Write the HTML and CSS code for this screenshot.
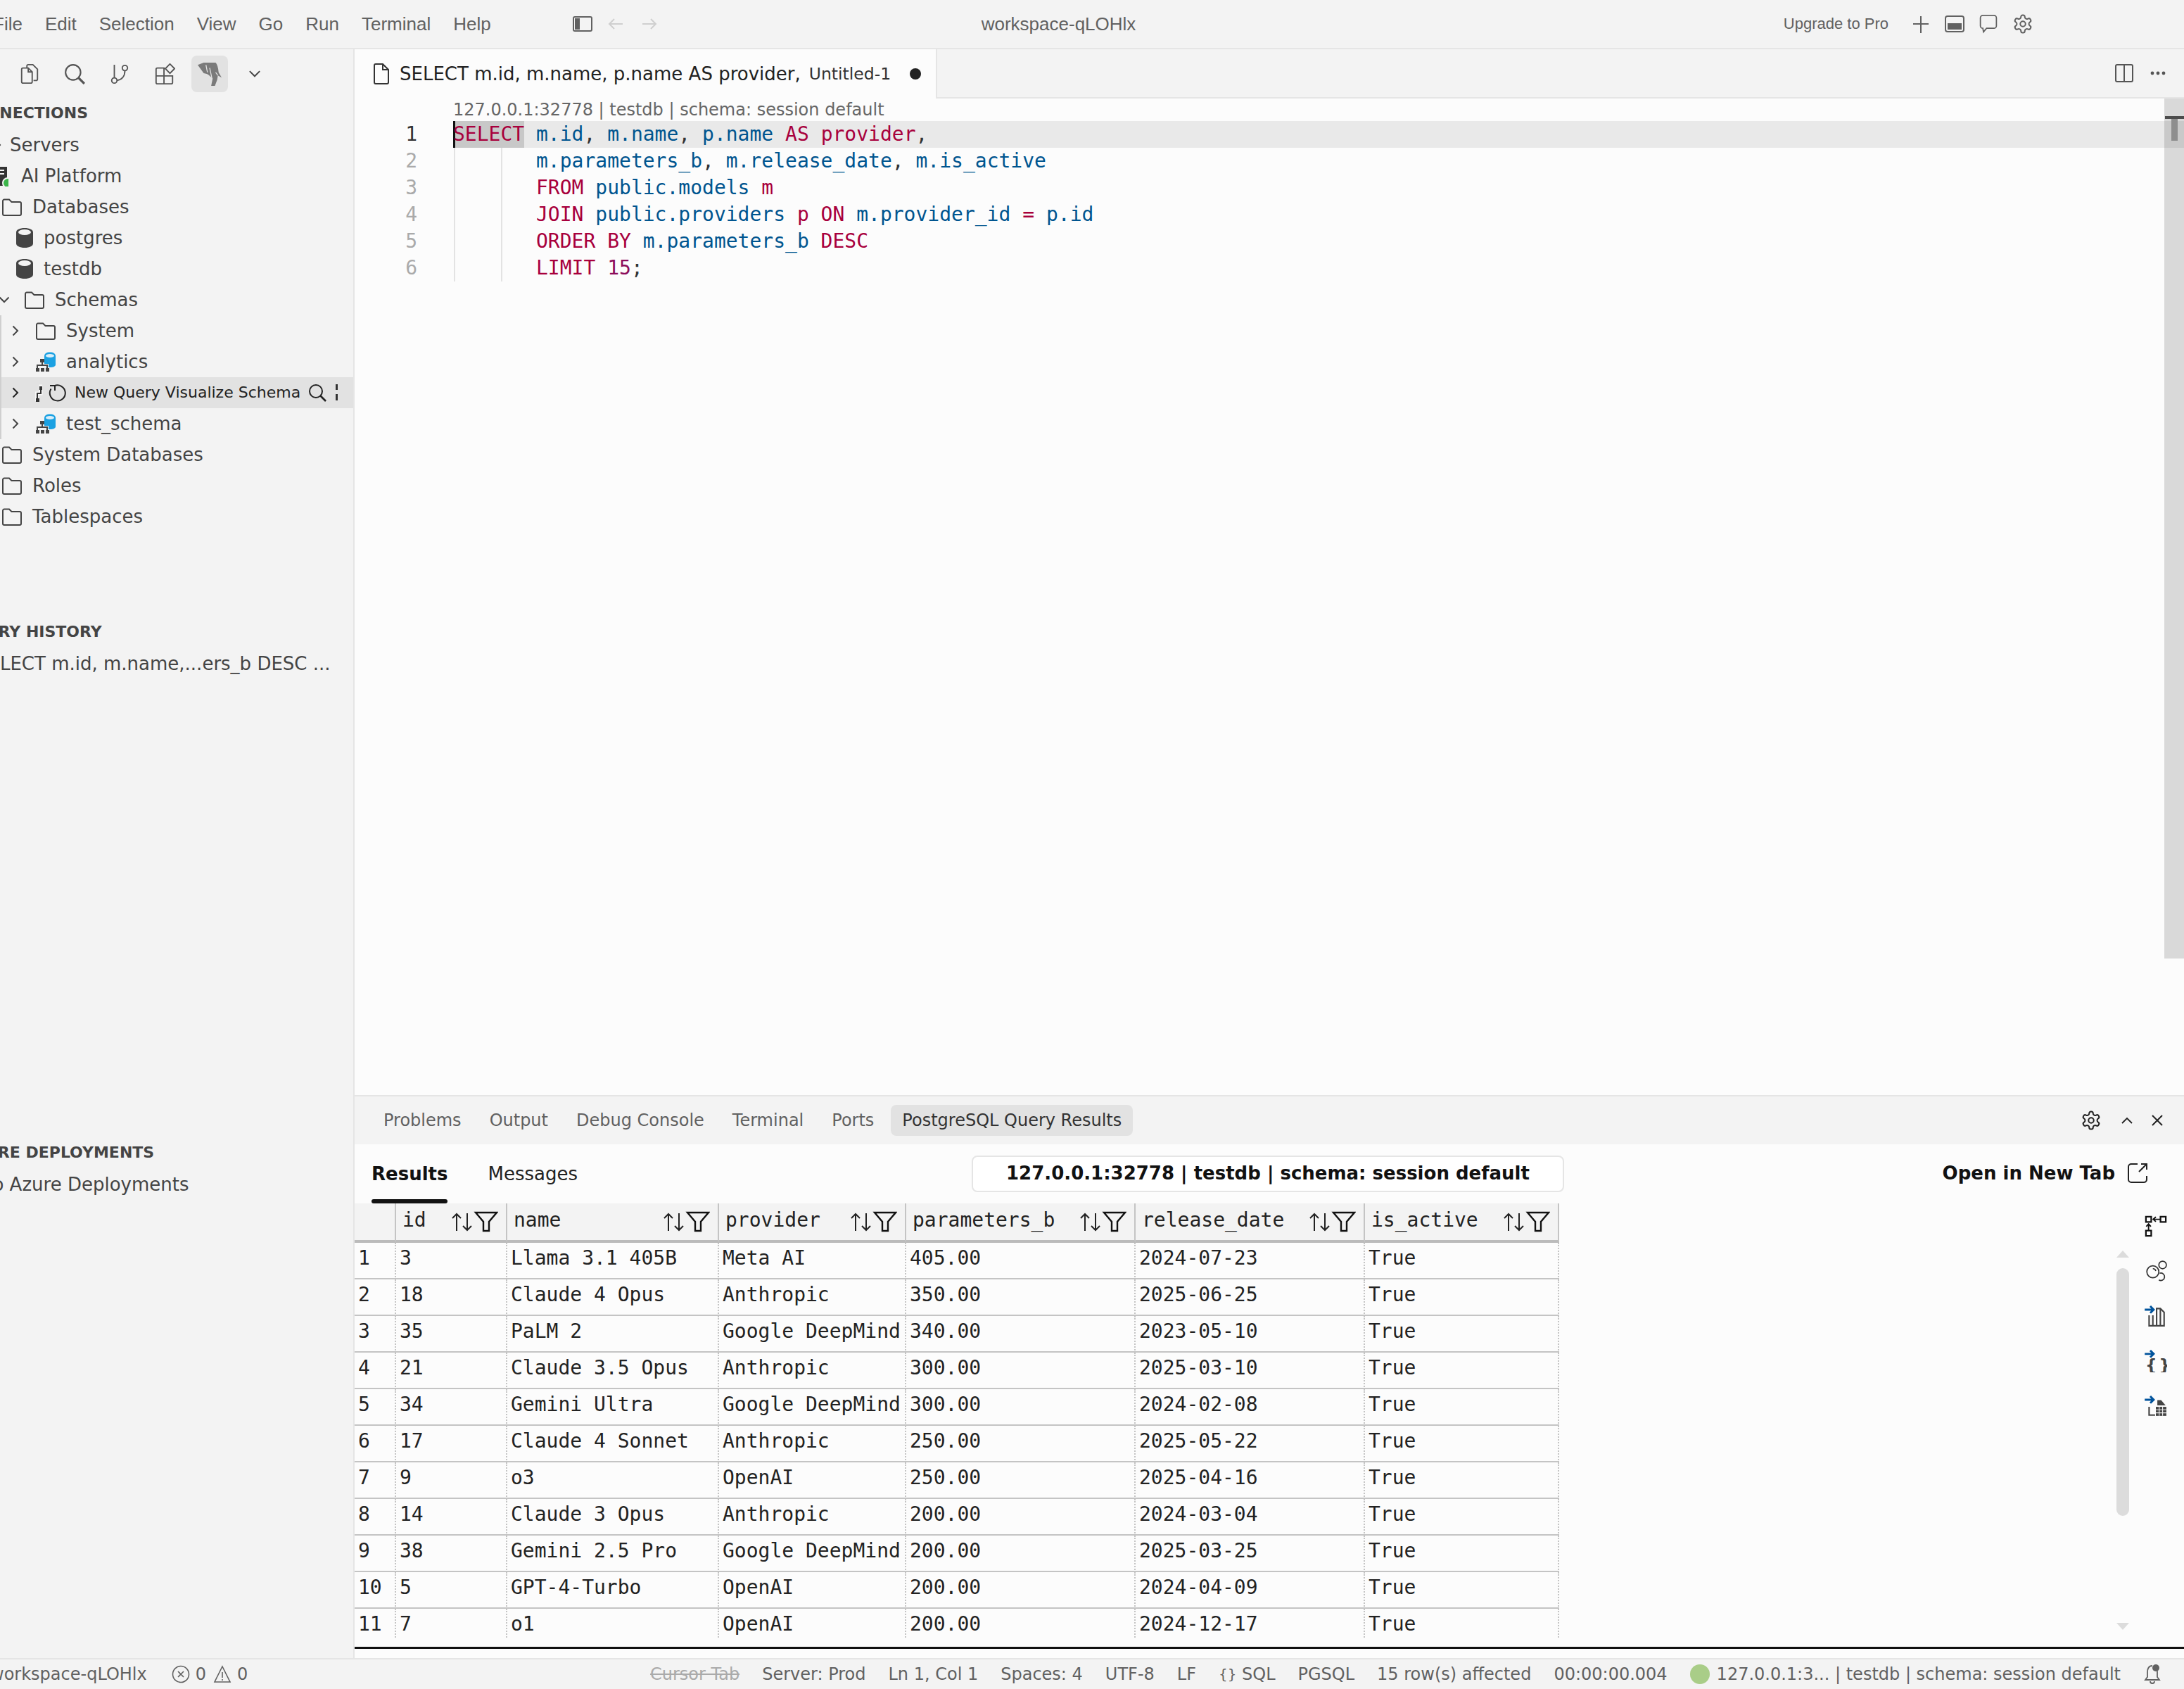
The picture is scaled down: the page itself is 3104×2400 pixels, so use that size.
FILE: index.html
```html
<!DOCTYPE html>
<html lang="en">
<head>
    <meta charset="UTF-8">
    <title>workspace-qLOHlx</title>
    <link rel="stylesheet" href="styles.css">
</head>
<body>
    <svg class="defs" width="0" height="0">
        <symbol id="folder" viewBox="0 0 30 30"><path d="M2 6.500a2 2 0 0 1 2-2h7l3.500 3.500H26a2 2 0 0 1 2 2V25a2 2 0 0 1-2 2H4a2 2 0 0 1-2-2z" fill="none" stroke="currentColor" stroke-width="2"/></symbol>
        <symbol id="chev-right" viewBox="0 0 20 20"><path d="M6.500 3.500 13 10l-6.500 6.500" fill="none" stroke="currentColor" stroke-width="2"/></symbol>
        <symbol id="chev-down" viewBox="0 0 20 20"><path d="M3.500 6.500 10 13l6.500-6.500" fill="none" stroke="currentColor" stroke-width="2"/></symbol>
        <symbol id="db" viewBox="0 0 26 30"><path d="M1 7c0-3.500 5-6 12-6s12 2.500 12 6v16c0 3.500-5 6-12 6S1 26.500 1 23z" fill="#444"/><ellipse cx="13" cy="7" rx="9" ry="4" fill="#f3f3f3"/></symbol>
        <symbol id="schema" viewBox="0 0 30 30"><path d="M13 7c0-3.500 3-5.500 8-5.500s8 2 8 5.500v12c0 2.500-3 4-8 4s-8-1.500-8-4z" fill="#1ba1e2"/><ellipse cx="21" cy="6.500" rx="6" ry="2.500" fill="#d9eef9"/><path d="M10 13v7M3 25v-5h14v5" fill="none" stroke="#f3f3f3" stroke-width="4"/><path d="M10 13v7M3 25v-5h14v5" fill="none" stroke="#444" stroke-width="2"/><path d="M7 11h6v5H7zM1 24h5v5H1zM8 24h5v5H8zM15 24h5v5h-5z" fill="#444"/></symbol>
        <symbol id="gear" viewBox="0 0 24 24"><g fill="none" stroke="currentColor" stroke-width="1.600"><path d="M12.220 2h-.44a2 2 0 0 0-2 2v.18a2 2 0 0 1-1 1.730l-.43.25a2 2 0 0 1-2 0l-.15-.08a2 2 0 0 0-2.730.73l-.22.38a2 2 0 0 0 .73 2.730l.15.1a2 2 0 0 1 1 1.720v.51a2 2 0 0 1-1 1.740l-.15.09a2 2 0 0 0-.73 2.730l.22.38a2 2 0 0 0 2.730.73l.15-.08a2 2 0 0 1 2 0l.43.25a2 2 0 0 1 1 1.730V20a2 2 0 0 0 2 2h.44a2 2 0 0 0 2-2v-.18a2 2 0 0 1 1-1.730l.43-.25a2 2 0 0 1 2 0l.15.08a2 2 0 0 0 2.730-.73l.22-.39a2 2 0 0 0-.73-2.730l-.15-.08a2 2 0 0 1-1-1.740v-.5a2 2 0 0 1 1-1.740l.15-.09a2 2 0 0 0 .73-2.730l-.22-.38a2 2 0 0 0-2.730-.73l-.15.08a2 2 0 0 1-2 0l-.43-.25a2 2 0 0 1-1-1.730V4a2 2 0 0 0-2-2z"/><circle cx="12" cy="12" r="3"/></g></symbol>
        <symbol id="sort-filter" viewBox="0 0 68 30"><path d="M9 28V4M3 10l6-6 6 6M24 3v24M18 21l6 6 6-6" fill="none" stroke="#222" stroke-width="2"/><path d="M36 2h30L55 15v13h-8V15z" fill="none" stroke="#111" stroke-width="2.400"/></symbol>
        <symbol id="arrow-blue" viewBox="0 0 16 12"><path d="M0 6h12M8 1l5 5-5 5" fill="none" stroke="#00539c" stroke-width="3"/></symbol>
    </svg>

    <div class="window">
        <header class="titlebar">
            <nav class="menu">
                <span>File</span><span>Edit</span><span>Selection</span><span>View</span><span>Go</span><span>Run</span><span>Terminal</span><span>Help</span>
            </nav>
            <svg class="layout-toggle" viewBox="0 0 28 24"><rect x="1" y="2" width="26" height="20" rx="2" fill="none" stroke="#616161" stroke-width="2"/><rect x="3" y="4" width="7" height="16" fill="#616161"/></svg>
            <svg class="nav-arrow first" viewBox="0 0 24 20"><path d="M22 10H3M10 3l-7 7 7 7" fill="none" stroke="#cfcfcf" stroke-width="2"/></svg>
            <svg class="nav-arrow" viewBox="0 0 24 20"><path d="M2 10h19M14 3l7 7-7 7" fill="none" stroke="#cfcfcf" stroke-width="2"/></svg>
            <div class="title">workspace-qLOHlx</div>
            <div class="title-actions">
                <span class="upgrade">Upgrade to Pro</span>
                <svg class="t-icon" viewBox="0 0 28 28"><path d="M14 3v24M3 14h22" stroke="#616161" stroke-width="2"/></svg>
                <svg class="t-icon" viewBox="0 0 28 28"><rect x="1" y="3" width="26" height="22" rx="3" fill="none" stroke="#616161" stroke-width="2"/><rect x="4" y="13" width="20" height="9" fill="#616161"/></svg>
                <svg class="t-icon" viewBox="0 0 28 32"><path d="M5 2h18a4 4 0 0 1 4 4v13a4 4 0 0 1-4 4H11l-5 6-1-6a4 4 0 0 1-4-4V6a4 4 0 0 1 4-4z" fill="none" stroke="#616161" stroke-width="2"/></svg>
                <svg class="t-icon gear-icon"><use href="#gear"/></svg>
            </div>
        </header>

        <div class="middle">
            <aside class="sidebar">
                <div class="activity">
                    <span class="act"><svg viewBox="0 0 28 32"><path d="M10 7V4a2 2 0 0 1 2-2h7l7 7v15a2 2 0 0 1-2 2h-4" fill="none" stroke="#555" stroke-width="2"/><path d="M4 7h8l6 6v15a2 2 0 0 1-2 2H4a2 2 0 0 1-2-2V9a2 2 0 0 1 2-2zM12 7v6h6" fill="none" stroke="#555" stroke-width="2"/></svg></span>
                    <span class="act"><svg viewBox="0 0 28 28"><circle cx="12" cy="12" r="10" fill="none" stroke="#555" stroke-width="2"/><path d="m19 19 8 8" stroke="#555" stroke-width="3"/></svg></span>
                    <span class="act"><svg viewBox="0 0 28 32"><circle cx="6" cy="26" r="4" fill="none" stroke="#555" stroke-width="2"/><circle cx="22" cy="7" r="4" fill="none" stroke="#555" stroke-width="2"/><path d="M6 22V2M22 11c0 8-4 14-12 15" fill="none" stroke="#555" stroke-width="2"/></svg></span>
                    <span class="act"><svg viewBox="0 0 32 32"><path d="M5 7h10v24H5a2 2 0 0 1-2-2V9a2 2 0 0 1 2-2zM15 19h13v10a2 2 0 0 1-2 2H15M3 19h12" fill="none" stroke="#555" stroke-width="2"/><path d="m24 1 7 7-7 7-7-7z" fill="none" stroke="#555" stroke-width="2"/></svg></span>
                    <span class="act active"><svg class="pg" viewBox="0 0 32 32"><path d="M0 4 8 1h16q3 3 4 13l4 7-5-3-1 6-3 8h-5l2-10-6-5-2-1-4-1z" fill="#7a7a7a"/><path d="m11 4 2 10M16 8l3 14M27 18l-3-4" fill="none" stroke="#e2e2e2" stroke-width="1.200"/></svg></span>
                    <span class="act"><svg class="small" viewBox="0 0 20 20"><path d="M3.500 6.500 10 13l6.500-6.500" fill="none" stroke="#444" stroke-width="1.800"/></svg></span>
                </div>

                <section class="sec-conn">
                    <h3 class="sec-title">CONNECTIONS</h3>
                    <div class="row servers"><svg class="chev"><use href="#chev-right"/></svg><span>Servers</span></div>
                    <div class="row platform">
                        <svg class="server-icon" viewBox="0 0 24 30"><rect x="0" y="2" width="22" height="27" fill="#333"/><path d="M4 7h14M4 12h14" stroke="#f3f3f3" stroke-width="2"/><circle cx="23" cy="25" r="8" fill="#f3f3f3"/><circle cx="23" cy="25" r="6" fill="#3cb54a"/></svg>
                        <span>AI Platform</span>
                    </div>
                    <div class="row top"><svg class="icon"><use href="#folder"/></svg><span>Databases</span></div>
                    <div class="row dbase"><svg class="db-icon"><use href="#db"/></svg><span>postgres</span></div>
                    <div class="row dbase"><svg class="db-icon"><use href="#db"/></svg><span>testdb</span></div>
                    <div class="row schemas"><svg class="chev"><use href="#chev-down"/></svg><svg class="icon"><use href="#folder"/></svg><span>Schemas</span></div>
                    <div class="guide-group">
                        <div class="row nested"><svg class="chev"><use href="#chev-right"/></svg><svg class="icon"><use href="#folder"/></svg><span>System</span></div>
                        <div class="row nested"><svg class="chev"><use href="#chev-right"/></svg><svg class="icon"><use href="#schema"/></svg><span>analytics</span></div>
                        <div class="row nested hovered">
                            <svg class="chev"><use href="#chev-right"/></svg>
                            <svg class="stub" viewBox="0 0 12 30"><path d="M10 6H8v10H2v11" fill="none" stroke="#f8f8f8" stroke-width="5"/><path d="M8 8v8H3v9" fill="none" stroke="#333" stroke-width="2"/><path d="M6 6h4v5H6zM1 23h5v5H1z" fill="#333"/></svg>
                            <svg class="spin" viewBox="0 0 26 26"><path d="M8 3.500A11 11 0 1 1 3.500 7.500M9 10V3H2" fill="none" stroke="#222" stroke-width="2"/></svg>
                            <span class="hover-text">New Query Visualize Schema</span>
                            <svg class="hover-search" viewBox="0 0 26 26"><circle cx="11" cy="11" r="9" fill="none" stroke="#222" stroke-width="2"/><path d="m17 17 8 8" stroke="#222" stroke-width="2.600"/></svg>
                            <svg class="hover-more" viewBox="0 0 3 24"><path d="M0 0h3v8H0zM0 14h3v9H0z" fill="#333"/></svg>
                        </div>
                        <div class="row nested"><svg class="chev"><use href="#chev-right"/></svg><svg class="icon"><use href="#schema"/></svg><span>test_schema</span></div>
                    </div>
                    <div class="row top"><svg class="icon"><use href="#folder"/></svg><span>System Databases</span></div>
                    <div class="row top"><svg class="icon"><use href="#folder"/></svg><span>Roles</span></div>
                    <div class="row top"><svg class="icon"><use href="#folder"/></svg><span>Tablespaces</span></div>
                </section>

                <section class="sec-history">
                    <h3 class="sec-title">QUERY HISTORY</h3>
                    <div class="row plain history-item"><span>SELECT m.id, m.name,...ers_b DESC ...</span></div>
                </section>

                <section>
                    <h3 class="sec-title">AZURE DEPLOYMENTS</h3>
                    <div class="row plain azure-item"><span>No Azure Deployments</span></div>
                </section>
            </aside>

            <main class="main">
                <div class="editor-area">
                    <div class="tabbar">
                        <div class="tab">
                            <svg class="file-icon" viewBox="0 0 24 30"><path d="M2 3a2 2 0 0 1 2-2h10l8 8v18a2 2 0 0 1-2 2H4a2 2 0 0 1-2-2zM14 1v8h8" fill="none" stroke="#333" stroke-width="2"/></svg>
                            <span class="tab-name">SELECT m.id, m.name, p.name AS provider,</span>
                            <span class="tab-desc">Untitled-1</span>
                            <span class="dirty"></span>
                        </div>
                        <div class="tab-actions">
                            <svg class="split-icon" viewBox="0 0 26 26"><rect x="1" y="1" width="24" height="24" rx="2" fill="none" stroke="#555" stroke-width="2"/><path d="M13 1v24" stroke="#555" stroke-width="2"/></svg>
                            <svg class="dots-icon" viewBox="0 0 22 6"><circle cx="3" cy="3" r="2.400" fill="#555"/><circle cx="11" cy="3" r="2.400" fill="#555"/><circle cx="19" cy="3" r="2.400" fill="#555"/></svg>
                        </div>
                    </div>
                    <div class="editor">
                        <div class="code-pane">
                            <div class="lens">127.0.0.1:32778 | testdb | schema: session default</div>
                            <div class="line current"><span class="ln">1</span><code><span class="kw sel">SELECT</span> <span class="id">m.id</span>, <span class="id">m.name</span>, <span class="id">p.name</span> <span class="kw">AS</span> <span class="kw">provider</span>,</code></div>
                            <div class="line"><span class="ln">2</span><code class="guides">       <span class="id">m.parameters_b</span>, <span class="id">m.release_date</span>, <span class="id">m.is_active</span></code></div>
                            <div class="line"><span class="ln">3</span><code class="guides">       <span class="kw">FROM</span> <span class="id">public.models</span> <span class="kw">m</span></code></div>
                            <div class="line"><span class="ln">4</span><code class="guides">       <span class="kw">JOIN</span> <span class="id">public.providers</span> <span class="kw">p</span> <span class="kw">ON</span> <span class="id">m.provider_id</span> <span class="kw">=</span> <span class="id">p.id</span></code></div>
                            <div class="line"><span class="ln">5</span><code class="guides">       <span class="kw">ORDER BY</span> <span class="id">m.parameters_b</span> <span class="kw">DESC</span></code></div>
                            <div class="line"><span class="ln">6</span><code class="guides">       <span class="kw">LIMIT</span> <span class="num">15</span>;</code></div>
                        </div>
                        <div class="ruler">
                            <div class="ruler-line"></div>
                            <div class="ruler-mark"></div>
                            <div class="ruler-cursor"></div>
                        </div>
                    </div>
                </div>

                <div class="panel">
                    <div class="panel-head">
                        <span class="ptab">Problems</span>
                        <span class="ptab">Output</span>
                        <span class="ptab">Debug Console</span>
                        <span class="ptab">Terminal</span>
                        <span class="ptab">Ports</span>
                        <span class="ptab on">PostgreSQL Query Results</span>
                        <div class="panel-actions">
                            <svg class="p-gear"><use href="#gear"/></svg>
                            <svg class="p-up" viewBox="0 0 16 10"><path d="m1 9 7-7 7 7" fill="none" stroke="#222" stroke-width="1.800"/></svg>
                            <svg class="p-close" viewBox="0 0 18 18"><path d="m2 2 14 14M16 2 2 16" stroke="#222" stroke-width="2"/></svg>
                        </div>
                    </div>
                    <div class="results-head">
                        <div class="rtab on"><span>Results</span></div>
                        <div class="rtab"><span>Messages</span></div>
                        <div class="conn-box">127.0.0.1:32778 | testdb | schema: session default</div>
                        <div class="open-tab">
                            <span>Open in New Tab</span>
                            <svg viewBox="0 0 28 28"><path d="M14 1H5a4 4 0 0 0-4 4v18a4 4 0 0 0 4 4h18a4 4 0 0 0 4-4v-5M16 12 27 1M19 1h8v8" fill="none" stroke="#222" stroke-width="2"/></svg>
                        </div>
                    </div>
                    <div class="results-body">
                        <div class="grid-wrap">
                            <table class="grid">
                                <colgroup><col class="c-n"><col class="c-id"><col class="c-name"><col class="c-prov"><col class="c-param"><col class="c-date"><col class="c-act"></colgroup>
                                <thead>
                                    <tr>
                                        <th></th>
                                        <th><div class="th-in"><span>id</span><svg><use href="#sort-filter"/></svg></div></th>
                                        <th><div class="th-in"><span>name</span><svg><use href="#sort-filter"/></svg></div></th>
                                        <th><div class="th-in"><span>provider</span><svg><use href="#sort-filter"/></svg></div></th>
                                        <th><div class="th-in"><span>parameters_b</span><svg><use href="#sort-filter"/></svg></div></th>
                                        <th><div class="th-in"><span>release_date</span><svg><use href="#sort-filter"/></svg></div></th>
                                        <th><div class="th-in"><span>is_active</span><svg><use href="#sort-filter"/></svg></div></th>
                                    </tr>
                                </thead>
                                <tbody>
                                    <tr><td>1</td><td>3</td><td>Llama 3.1 405B</td><td>Meta AI</td><td>405.00</td><td>2024-07-23</td><td>True</td></tr>
                                    <tr><td>2</td><td>18</td><td>Claude 4 Opus</td><td>Anthropic</td><td>350.00</td><td>2025-06-25</td><td>True</td></tr>
                                    <tr><td>3</td><td>35</td><td>PaLM 2</td><td>Google DeepMind</td><td>340.00</td><td>2023-05-10</td><td>True</td></tr>
                                    <tr><td>4</td><td>21</td><td>Claude 3.5 Opus</td><td>Anthropic</td><td>300.00</td><td>2025-03-10</td><td>True</td></tr>
                                    <tr><td>5</td><td>34</td><td>Gemini Ultra</td><td>Google DeepMind</td><td>300.00</td><td>2024-02-08</td><td>True</td></tr>
                                    <tr><td>6</td><td>17</td><td>Claude 4 Sonnet</td><td>Anthropic</td><td>250.00</td><td>2025-05-22</td><td>True</td></tr>
                                    <tr><td>7</td><td>9</td><td>o3</td><td>OpenAI</td><td>250.00</td><td>2025-04-16</td><td>True</td></tr>
                                    <tr><td>8</td><td>14</td><td>Claude 3 Opus</td><td>Anthropic</td><td>200.00</td><td>2024-03-04</td><td>True</td></tr>
                                    <tr><td>9</td><td>38</td><td>Gemini 2.5 Pro</td><td>Google DeepMind</td><td>200.00</td><td>2025-03-25</td><td>True</td></tr>
                                    <tr><td>10</td><td>5</td><td>GPT-4-Turbo</td><td>OpenAI</td><td>200.00</td><td>2024-04-09</td><td>True</td></tr>
                                    <tr><td>11</td><td>7</td><td>o1</td><td>OpenAI</td><td>200.00</td><td>2024-12-17</td><td>True</td></tr>
                                </tbody>
                            </table>
                        </div>
                        <div class="v-scroll">
                            <svg class="up" viewBox="0 0 18 10"><path d="M9 0l9 10H0z" fill="#dcdcdc"/></svg>
                            <div class="thumb"></div>
                            <svg class="down" viewBox="0 0 18 10"><path d="M0 0h18L9 10z" fill="#dcdcdc"/></svg>
                        </div>
                        <div class="tools">
                            <svg viewBox="0 0 34 32"><path d="M2 2h8v8H2zM24 2h8v8h-8zM2 23h8v8H2z" fill="none" stroke="#111" stroke-width="2.400"/><path d="M24 6H14M17 2.500 13 6l4 3.500M6 23V14M2.500 17 6 13l3.500 4" fill="none" stroke="#111" stroke-width="2"/></svg>
                            <svg viewBox="0 0 30 28"><circle cx="11" cy="15" r="8" fill="none" stroke="#333" stroke-width="1.600"/><circle cx="24" cy="6" r="5" fill="none" stroke="#333" stroke-width="1.600"/><path d="M20 17a5 5 0 1 1-1 9" fill="none" stroke="#333" stroke-width="1.600"/><path d="M11 11a4 4 0 0 1 4 3" fill="none" stroke="#333" stroke-width="1.400"/></svg>
                            <svg viewBox="0 0 30 28"><path d="M6 13v14h20V9l-5-5h-5v23M11 13v14M21 4v23" fill="none" stroke="#444" stroke-width="2"/><use href="#arrow-blue" x="0" y="0" width="15" height="11"/></svg>
                            <svg viewBox="0 0 30 30"><text class="brace" x="1" y="28">{</text><text class="brace" x="19" y="28">}</text><use href="#arrow-blue" x="0" y="0" width="15" height="11"/></svg>
                            <svg viewBox="0 0 30 28"><path d="M6 15v11h8" fill="none" stroke="#444" stroke-width="2"/><path d="M17 6h5l6 7H17z" fill="#444"/><rect x="15" y="15" width="14" height="12" fill="#444"/><path d="M15 19h14M15 23h14M19.500 15v12M24 15v12" stroke="#f4f4f4" stroke-width="1"/><use href="#arrow-blue" x="0" y="0" width="15" height="11"/></svg>
                        </div>
                    </div>
                    <div class="grid-end"></div>
                </div>
            </main>
        </div>

        <footer class="statusbar">
            <span class="s-work">workspace-qLOHlx</span>
            <svg class="s-icon err" viewBox="0 0 26 26"><circle cx="13" cy="13" r="11.500" fill="none" stroke="#616161" stroke-width="1.600"/><path d="m9 9 8 8M17 9l-8 8" stroke="#616161" stroke-width="1.600"/></svg>
            <span class="s-count">0</span>
            <svg class="s-icon warn" viewBox="0 0 26 26"><path d="M13 2 24 24H2zM13 10v8M13 20v2" fill="none" stroke="#616161" stroke-width="1.600"/></svg>
            <span class="s-count">0</span>
            <div class="s-right">
                <span class="struck">Cursor Tab</span>
                <span>Server: Prod</span>
                <span>Ln 1, Col 1</span>
                <span>Spaces: 4</span>
                <span>UTF-8</span>
                <span>LF</span>
                <span class="s-lang"><i class="s-braces">{}</i>SQL</span>
                <span>PGSQL</span>
                <span>15 row(s) affected</span>
                <span>00:00:00.004</span>
                <span class="s-conn"><i class="s-dot"></i>127.0.0.1:3... | testdb | schema: session default</span>
                <svg class="s-bell" viewBox="0 0 26 30"><path d="M13 3C8 3 6 7 6 12v7l-3 4h20l-3-4v-7c0-3-1-6-3-7.500M10 25a3 3 0 0 0 6 0" fill="none" stroke="#616161" stroke-width="1.800"/><circle cx="18" cy="6" r="5" fill="#616161"/></svg>
            </div>
        </footer>
    </div>
</body>
</html>
```

FILE: styles.css
```css
* {
    margin: 0;
    padding: 0;
    box-sizing: border-box;
}

body {
    width: 3104px;
    height: 2400px;
    overflow: hidden;
    font-family: "DejaVu Sans", sans-serif;
    background: #f3f3f3;
    color: #444;
}

.defs {
    display: block;
    height: 0;
}

svg {
    flex: none;
    display: block;
}

.window {
    display: flex;
    flex-direction: column;
    height: 2400px;
}

/* title bar */
.titlebar {
    display: flex;
    align-items: center;
    height: 70px;
    flex: none;
    border-bottom: 2px solid #e5e5e5;
    font-family: "Liberation Sans", sans-serif;
    font-size: 26px;
    color: #616161;
}

.menu {
    display: flex;
    margin-left: -26px;
}

.menu span {
    padding: 0 16px;
}

.layout-toggle {
    width: 28px;
    height: 24px;
    margin-left: 100px;
}

.nav-arrow {
    width: 24px;
    height: 20px;
    margin-left: 24px;
}

.nav-arrow.first {
    margin-left: 21px;
}

.title {
    margin-left: 460px;
}

.title-actions {
    display: flex;
    align-items: center;
    gap: 20px;
    margin-left: auto;
    padding-right: 214px;
}

.upgrade {
    font-size: 22px;
    margin-right: 12px;
}

.t-icon {
    width: 28px;
    height: 28px;
}

.gear-icon {
    width: 30px;
    height: 30px;
    color: #616161;
}

.middle {
    display: flex;
    flex: 1;
    min-height: 0;
}

/* sidebar */
.sidebar {
    width: 504px;
    flex: none;
    border-right: 2px solid #e5e5e5;
    overflow: hidden;
}

.activity {
    display: flex;
    align-items: center;
    gap: 12px;
    height: 70px;
    padding-left: 16px;
}

.act {
    display: flex;
    align-items: center;
    justify-content: center;
    width: 52px;
    height: 52px;
    border-radius: 8px;
}

.act svg {
    width: 30px;
    height: 30px;
}

.act svg.pg {
    width: 34px;
    height: 34px;
}

.act svg.small {
    width: 22px;
    height: 22px;
}

.act.active {
    background: #e2e2e2;
}

.sec-conn {
    height: 737px;
}

.sec-history {
    height: 740px;
}

.sec-title {
    height: 44px;
    padding-top: 1px;
    margin-left: -54px;
    line-height: 40px;
    font-size: 22px;
    font-weight: 700;
    color: #444;
    white-space: nowrap;
}

.row {
    display: flex;
    align-items: center;
    height: 44px;
    font-size: 26px;
    color: #444;
    white-space: nowrap;
}

.chev {
    width: 20px;
    height: 20px;
    color: #444;
}

.icon {
    width: 30px;
    height: 30px;
    color: #444;
    margin-right: 14px;
}

.servers .chev {
    margin-left: -13px;
    margin-right: 7px;
}

.server-icon {
    width: 24px;
    height: 30px;
    margin-left: -12px;
    margin-right: 18px;
}

.top {
    padding-left: 2px;
}

.dbase {
    padding-left: 22px;
}

.db-icon {
    width: 26px;
    height: 30px;
    margin-right: 14px;
}

.schemas .chev {
    margin-left: -4px;
    margin-right: 18px;
}

.guide-group {
    border-left: 2px solid #cfcfcf;
}

.nested {
    padding-left: 10px;
}

.nested .chev {
    margin-right: 18px;
}

.hovered {
    background: #e2e2e2;
    color: #222;
}

.hovered .chev {
    color: #222;
}

.stub {
    width: 12px;
    height: 30px;
    margin-right: 7px;
}

.spin {
    width: 26px;
    height: 26px;
    margin-right: 11px;
}

.hover-text {
    font-size: 22px;
    padding-bottom: 2px;
}

.hover-search {
    width: 26px;
    height: 26px;
    margin-left: 11px;
}

.hover-more {
    width: 3px;
    height: 24px;
    margin-left: 13px;
}

.history-item {
    margin-left: -33px;
}

.azure-item {
    margin-left: -30px;
}

/* editor */
.main {
    flex: 1;
    min-width: 0;
    display: flex;
    flex-direction: column;
}

.editor-area {
    height: 1486px;
    flex: none;
    display: flex;
    flex-direction: column;
    background: #fcfcfc;
}

.tabbar {
    display: flex;
    height: 70px;
    flex: none;
    background: #f3f3f3;
    border-bottom: 2px solid #e5e5e5;
}

.tab {
    display: flex;
    align-items: center;
    width: 828px;
    height: 70px;
    padding-left: 26px;
    background: #fcfcfc;
    border-right: 2px solid #e5e5e5;
    color: #222;
}

.file-icon {
    width: 24px;
    height: 30px;
}

.tab-name {
    margin-left: 14px;
    font-size: 26px;
    white-space: nowrap;
}

.tab-desc {
    margin-left: 12px;
    font-size: 23.500px;
    color: #333;
}

.dirty {
    width: 16px;
    height: 16px;
    margin-left: 27px;
    border-radius: 50%;
    background: #222;
}

.tab-actions {
    display: flex;
    align-items: center;
    margin-left: auto;
    padding-right: 26px;
}

.split-icon {
    width: 26px;
    height: 26px;
}

.dots-icon {
    width: 22px;
    height: 6px;
    margin-left: 24px;
}

.editor {
    flex: 1;
    min-height: 0;
    display: flex;
    font-family: "DejaVu Sans Mono", monospace;
    font-size: 28px;
}

.code-pane {
    flex: 1;
    min-width: 0;
}

.lens {
    height: 32px;
    padding: 1px 0 0 140px;
    font-family: "DejaVu Sans", sans-serif;
    font-size: 24px;
    line-height: 30px;
    color: #666;
    white-space: nowrap;
}

.line {
    display: flex;
    height: 38px;
    line-height: 38px;
    color: #333;
}

.line.current code {
    background: #e9e9e9;
}

.ln {
    width: 89px;
    margin-right: 51px;
    text-align: right;
    flex: none;
    color: #aaa;
}

.current .ln {
    color: #333;
}

.line code {
    display: block;
    flex: 1;
    font-family: inherit;
    white-space: pre;
}

.guides {
    background-image: linear-gradient(#e3e3e3, #e3e3e3), linear-gradient(#e3e3e3, #e3e3e3);
    background-size: 2px 100%, 2px 100%;
    background-position: 1px 0, 68px 0;
    background-repeat: no-repeat;
}

.kw {
    color: #a8003c;
}

.id {
    color: #00558f;
}

.num {
    color: #8c0d5a;
}

.sel {
    display: inline-block;
    height: 38px;
    background: #c8c8c8;
    box-shadow: inset 3px 0 0 #111;
}

.ruler {
    position: relative;
    width: 28px;
    height: 1222px;
    flex: none;
    background: #d9d9d9;
}

.ruler-line {
    margin-top: 32px;
    height: 38px;
    background: #c9c9c9;
}

.ruler-mark {
    position: absolute;
    top: 25px;
    left: 1px;
    right: 0;
    height: 4px;
    background: #4c4c4c;
}

.ruler-cursor {
    position: absolute;
    top: 29px;
    left: 10px;
    width: 9px;
    height: 31px;
    background: #8e8e8e;
}

/* bottom panel */
.panel {
    flex: 1;
    min-height: 0;
    display: flex;
    flex-direction: column;
    background: #fcfcfc;
    border-top: 2px solid #e5e5e5;
}

.panel-head {
    display: flex;
    align-items: center;
    height: 68px;
    flex: none;
    padding-left: 25px;
    background: #f3f3f3;
    font-size: 24px;
    color: #616161;
}

.ptab {
    height: 44px;
    line-height: 44px;
    padding: 0 16px;
    margin-right: 8px;
    border-radius: 8px;
    white-space: nowrap;
}

.ptab.on {
    background: #e2e2e2;
    color: #333;
}

.panel-actions {
    display: flex;
    align-items: center;
    margin-left: auto;
    padding-right: 29px;
}

.p-gear {
    width: 30px;
    height: 30px;
    color: #222;
}

.p-up {
    width: 16px;
    height: 10px;
    margin-left: 28px;
}

.p-close {
    width: 18px;
    height: 18px;
    margin-left: 26px;
}

.results-head {
    display: flex;
    height: 84px;
    flex: none;
    padding-left: 24px;
    font-size: 26px;
    color: #222;
}

.rtab {
    display: flex;
    flex-direction: column;
    margin-right: 57px;
}

.rtab span {
    flex: 1;
    display: flex;
    align-items: center;
}

.rtab.on {
    font-weight: 700;
    color: #111;
}

.rtab.on span {
    padding-top: 6px;
}

.rtab.on::after {
    content: "";
    display: block;
    height: 6px;
    border-radius: 3px;
    background: #111;
}

.conn-box {
    width: 842px;
    height: 52px;
    margin: 16px 0 0 503px;
    border: 2px solid #e5e5e5;
    border-radius: 8px;
    background: #fff;
    text-align: center;
    font-weight: 700;
    line-height: 46px;
    color: #111;
    white-space: nowrap;
}

.open-tab {
    display: flex;
    align-items: center;
    gap: 18px;
    height: 82px;
    margin-left: auto;
    padding-right: 52px;
    font-weight: 700;
    color: #111;
}

.open-tab svg {
    width: 28px;
    height: 28px;
}

.results-body {
    display: flex;
    height: 617px;
    flex: none;
}

.grid-wrap {
    width: 1712px;
    flex: none;
    overflow: hidden;
}

.grid {
    width: 1712px;
    table-layout: fixed;
    border-collapse: separate;
    border-spacing: 0;
    font-family: "DejaVu Sans Mono", monospace;
    font-size: 28px;
    color: #222;
}

.c-n { width: 59px; }
.c-id { width: 158px; }
.c-name { width: 301px; }
.c-prov { width: 266px; }
.c-param { width: 326px; }
.c-date { width: 326px; }
.c-act { width: 276px; }

.grid th {
    height: 56px;
    background: #f3f3f3;
    font-weight: 400;
    text-align: left;
    border-right: 2px solid #c4c4c4;
    border-bottom: 4px solid #bbb;
}

.th-in {
    display: flex;
    align-items: center;
    justify-content: space-between;
    padding: 0 11px 0 9px;
}

.th-in span {
    margin-bottom: 6px;
}

.th-in svg {
    width: 68px;
    height: 30px;
}

.grid td {
    height: 52px;
    padding: 0 0 8px 5px;
    border-right: 2px dotted #c4c4c4;
    border-bottom: 2px solid #c4c4c4;
    white-space: pre;
    overflow: hidden;
}

.v-scroll {
    display: flex;
    flex-direction: column;
    width: 18px;
    flex: none;
    margin-left: 792px;
    padding: 67px 0 11px;
}

.v-scroll .up,
.v-scroll .down {
    width: 18px;
    height: 10px;
}

.thumb {
    height: 352px;
    margin-top: 15px;
    border-radius: 9px;
    background: #dcdcdc;
}

.v-scroll .down {
    margin-top: auto;
}

.tools {
    display: flex;
    flex-direction: column;
    gap: 32px;
    width: 32px;
    flex: none;
    margin-left: 22px;
    padding-top: 16px;
}

.tools svg {
    width: 32px;
    height: 32px;
}

.brace {
    font-family: "DejaVu Sans", sans-serif;
    font-size: 22px;
    font-weight: 700;
    fill: #444;
}

.grid-end {
    height: 3px;
    margin-top: 13px;
    background: #111;
}

/* status bar */
.statusbar {
    display: flex;
    align-items: center;
    height: 44px;
    flex: none;
    border-top: 2px solid #e5e5e5;
    font-size: 24px;
    color: #616161;
    white-space: nowrap;
}

.s-work {
    margin-left: -14px;
}

.s-icon {
    width: 26px;
    height: 26px;
}

.err {
    margin-left: 35px;
}

.warn {
    margin-left: 10px;
}

.s-count {
    margin-left: 8px;
}

.s-right {
    display: flex;
    align-items: center;
    gap: 32px;
    margin-left: auto;
    padding-right: 32px;
}

.struck {
    color: #aaa;
    text-decoration: line-through;
}

.s-lang {
    display: flex;
    align-items: center;
}

.s-braces {
    font-style: normal;
    font-size: 20px;
    margin-right: 11px;
    width: 22px;
    white-space: nowrap;
}

.s-conn {
    display: flex;
    align-items: center;
}

.s-dot {
    width: 28px;
    height: 28px;
    margin-right: 10px;
    border-radius: 50%;
    background: #a9cd88;
}

.s-bell {
    width: 26px;
    height: 30px;
}
```
